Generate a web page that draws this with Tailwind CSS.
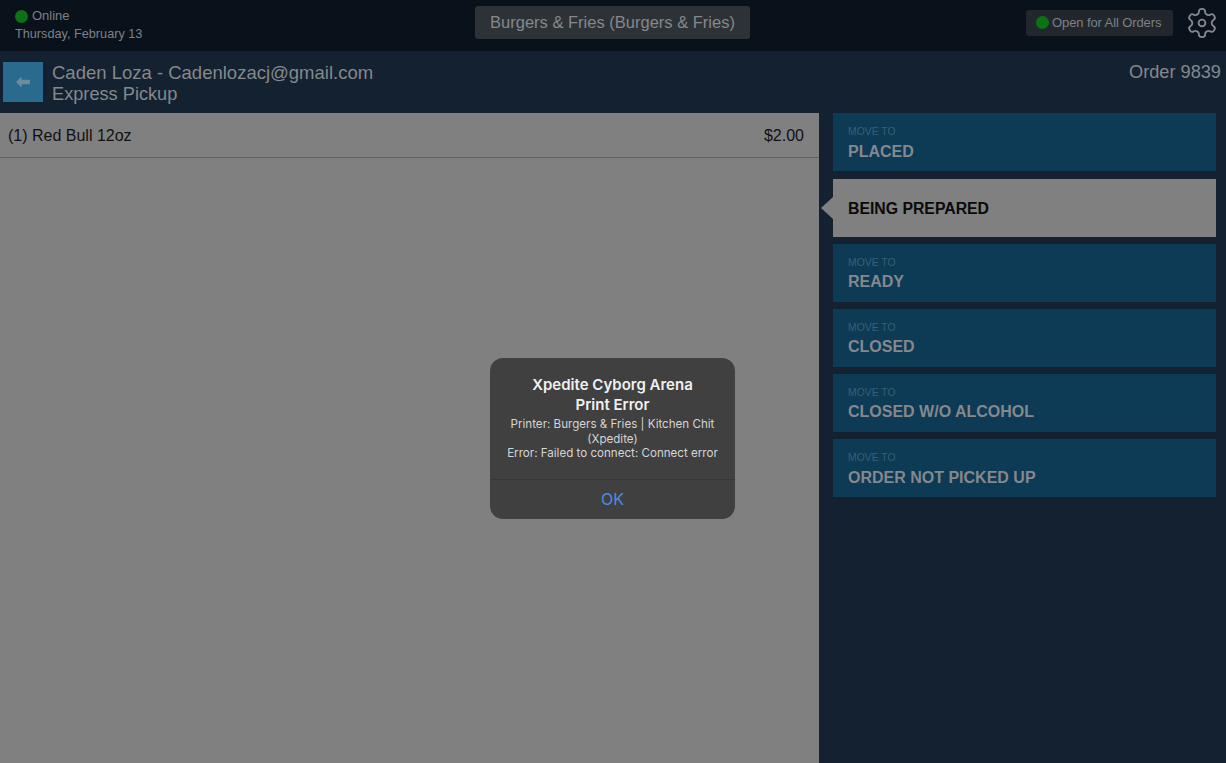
<!DOCTYPE html>
<html lang="en">
<head>
    <meta charset="UTF-8">
    <title>Order 9839</title>
    <script src="https://cdn.jsdelivr.net/npm/@tailwindcss/browser@4"></script>
</head>
<body class="bg-[#142131] font-['Liberation_Sans',Arial,sans-serif]">
    <div class="relative w-[1226px] h-[763px] overflow-hidden flex flex-col">

        <!-- Top bar -->
        <header class="h-[51px] shrink-0 bg-[#09111b] flex items-start justify-between pt-[6px] pl-[15px] pr-[9px]">
            <div class="w-[293px] text-[#7d8186]">
                <div class="flex items-center gap-[4px] text-[13px] leading-[18px] mt-[1px]">
                    <span class="w-[13px] h-[13px] rounded-full bg-[#0b7216]"></span>
                    <span>Online</span>
                </div>
                <div class="text-[12.7px] leading-[18px]">Thursday, February 13</div>
            </div>
            <div class="h-[33px] w-[275px] rounded-[3px] bg-[#2d3237] text-[#85888c] text-[16.5px] flex items-center justify-center">Burgers &amp; Fries (Burgers &amp; Fries)</div>
            <div class="w-[300px] h-[33px] flex items-center justify-end gap-[12px]">
                <div class="h-[26px] w-[147px] rounded-[3px] bg-[#22272d] text-[#7d8186] text-[13px] tracking-[-0.1px] flex items-center pl-[10px] gap-[3px]">
                    <span class="w-[13px] h-[13px] rounded-full bg-[#0b7216]"></span>
                    <span>Open for All Orders</span>
                </div>
                <svg class="w-[34px] h-[34px] text-[#85888c] mr-[-2px]" viewBox="0 0 24 24" fill="none" stroke="currentColor" stroke-width="1.3" stroke-linecap="round" stroke-linejoin="round">
                    <path d="M12.22 2h-.44a2 2 0 0 0-2 2v.18a2 2 0 0 1-1 1.73l-.43.25a2 2 0 0 1-2 0l-.15-.08a2 2 0 0 0-2.73.73l-.22.38a2 2 0 0 0 .73 2.73l.15.1a2 2 0 0 1 1 1.72v.51a2 2 0 0 1-1 1.74l-.15.09a2 2 0 0 0-.73 2.73l.22.38a2 2 0 0 0 2.73.73l.15-.08a2 2 0 0 1 2 0l.43.25a2 2 0 0 1 1 1.73V20a2 2 0 0 0 2 2h.44a2 2 0 0 0 2-2v-.18a2 2 0 0 1 1-1.73l.43-.25a2 2 0 0 1 2 0l.15.08a2 2 0 0 0 2.73-.73l.22-.39a2 2 0 0 0-.73-2.73l-.15-.08a2 2 0 0 1-1-1.74v-.5a2 2 0 0 1 1-1.74l.15-.09a2 2 0 0 0 .73-2.73l-.22-.38a2 2 0 0 0-2.73-.73l-.15.08a2 2 0 0 1-2 0l-.43-.25a2 2 0 0 1-1-1.73V4a2 2 0 0 0-2-2z"/>
                    <circle cx="12" cy="12" r="2.4"/>
                </svg>
            </div>
        </header>

        <!-- Order header -->
        <div class="h-[62px] shrink-0 bg-[#142131] flex items-start pl-[3px] pr-[5px]">
            <div class="mt-[11px] w-[40px] h-[40px] bg-[#2a6a8e] flex items-center justify-center">
                <svg class="w-[14px] h-[12px]" viewBox="0 0 15 12" fill="#6e8a9b"><path d="M0 6 6 0v3.5h9v5H6V12z"/></svg>
            </div>
            <div class="ml-[9px] mt-[11px] text-[#85888c] leading-[21px]">
                <div class="text-[18.5px]">Caden Loza - Cadenlozacj@gmail.com</div>
                <div class="text-[18.2px] mt-[1px]">Express Pickup</div>
            </div>
            <div class="ml-auto mt-[11px] text-[#85888c] text-[18.2px] leading-[21px]">Order 9839</div>
        </div>

        <div class="flex-1 flex min-h-0">
            <!-- Items -->
            <main class="w-[819px] bg-[#808080]">
                <div class="h-[45px] pt-[1px] border-b border-[#5f6163] flex items-center justify-between pl-[8px] pr-[15px] text-[#111111] text-[16px]">
                    <span>(1) Red Bull 12oz</span>
                    <span>$2.00</span>
                </div>
            </main>

            <!-- Status buttons -->
            <aside class="flex-1 pl-[14px] pr-[10px] flex flex-col">
                <div class="h-[58px] bg-[#0d3a55] pl-[15px] pt-[12px]">
                    <div class="text-[10.4px] leading-[13px] text-[#35607a]">MOVE TO</div>
                    <div class="text-[16px] leading-[20px] mt-[4px] font-bold text-[#85888c]">PLACED</div>
                </div>
                <div class="relative h-[58px] mt-[8px] pt-[2px] bg-[#808080] pl-[15px] flex items-center">
                    <span class="absolute left-[-12px] top-[18px] w-0 h-0 border-y-[11px] border-y-transparent border-r-[12px] border-r-[#808080]"></span>
                    <span class="text-[15.8px] font-bold text-[#0a0a0a]">BEING PREPARED</span>
                </div>
                <div class="h-[58px] mt-[7px] bg-[#0d3a55] pl-[15px] pt-[12px]">
                    <div class="text-[10.4px] leading-[13px] text-[#35607a]">MOVE TO</div>
                    <div class="text-[16px] leading-[20px] mt-[3px] font-bold text-[#85888c]">READY</div>
                </div>
                <div class="h-[58px] mt-[7px] bg-[#0d3a55] pl-[15px] pt-[12px]">
                    <div class="text-[10.4px] leading-[13px] text-[#35607a]">MOVE TO</div>
                    <div class="text-[16px] leading-[20px] mt-[3px] font-bold text-[#85888c]">CLOSED</div>
                </div>
                <div class="h-[58px] mt-[7px] bg-[#0d3a55] pl-[15px] pt-[12px]">
                    <div class="text-[10.4px] leading-[13px] text-[#35607a]">MOVE TO</div>
                    <div class="text-[16px] leading-[20px] mt-[3px] font-bold text-[#85888c]">CLOSED W/O ALCOHOL</div>
                </div>
                <div class="h-[58px] mt-[7px] bg-[#0d3a55] pl-[15px] pt-[12px]">
                    <div class="text-[10.4px] leading-[13px] text-[#35607a]">MOVE TO</div>
                    <div class="text-[16px] leading-[20px] mt-[4px] font-bold text-[#85888c]">ORDER NOT PICKED UP</div>
                </div>
            </aside>
        </div>

        <!-- Alert -->
        <div class="absolute left-[490px] top-[358px] w-[245px] h-[161px] rounded-[13px] bg-[#404040] flex flex-col text-center">
            <div class="flex-1 px-[12px] pt-[17px]">
                <div class="text-[#f0f0f0] text-[15px] leading-[20px] font-semibold font-['Inter',sans-serif]">Xpedite Cyborg Arena<br>Print Error</div>
                <div class="text-[#d4d4d4] text-[11.6px] leading-[14.5px] mt-[2px] font-['Inter',sans-serif]">Printer: Burgers &amp; Fries | Kitchen Chit (Xpedite)<br>Error: Failed to connect: Connect error</div>
            </div>
            <div class="h-[40px] pb-[2px] border-t border-[#363636] flex items-center justify-center text-[#4a8fe0] text-[16px] font-['Inter',sans-serif]">OK</div>
        </div>
    </div>
</body>
</html>
